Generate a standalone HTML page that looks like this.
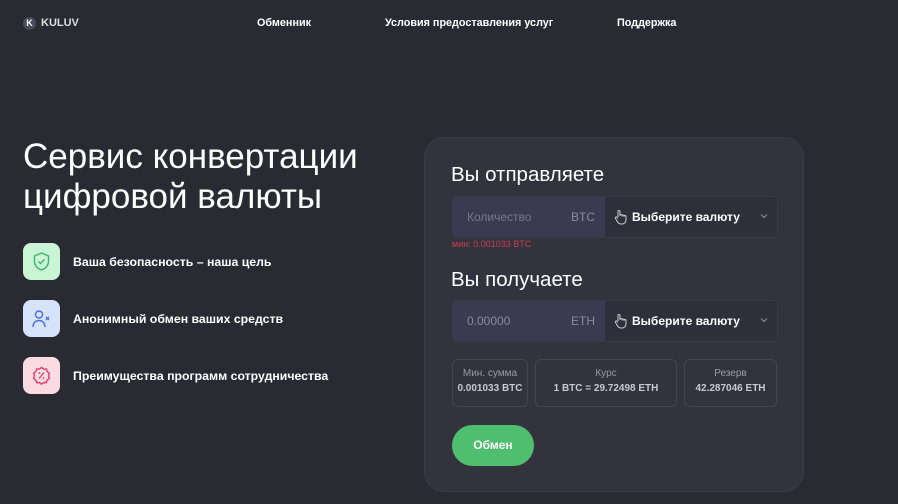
<!DOCTYPE html>
<html><head><meta charset="utf-8"><style>
*{margin:0;padding:0;box-sizing:border-box}
body{width:898px;height:504px;overflow:hidden;background:#2a2a33;font-family:"Liberation Sans",sans-serif;color:#fff;position:relative}
.a{position:absolute}
.nav{font-size:10.8px;font-weight:bold;top:17px}
.feat{left:23px;width:37px;height:37px;border-radius:8px}
.ft{left:73px;font-size:12.3px;font-weight:bold}
.card{left:424px;top:137px;width:380px;height:355px;border-radius:20px;background:#33333e;border:1px solid #3b3b47}
.inp{left:27px;width:326px;height:42px;border-radius:5px;background:#2f2e3b;border:1px solid #3a3948;overflow:hidden}
.inp .l{position:absolute;left:0;top:0;width:152px;height:100%;background:#3b3a50}
.ph{position:absolute;left:14px;top:13px;font-size:12px;color:#77778a}
.cur{position:absolute;left:118px;top:13px;font-size:12px;color:#8a8a9a}
.sel{position:absolute;left:179px;top:13px;font-size:12px;font-weight:bold}
.hand{position:absolute;left:161px;top:12px}
.chev{position:absolute;right:8px;top:14px}
.h{left:26px;font-size:20.5px}
.box{top:221px;height:48px;border:1px solid #45444f;border-radius:6px;text-align:center}
.box .t{font-size:10px;color:#9a9aa6;margin-top:8px}
.box .v{font-size:10px;font-weight:bold;color:#c8c8d0;margin-top:4px}
</style></head><body>
<div class="a" style="left:23px;top:17px;width:13px;height:13px;border-radius:50%;background:#4a4a5c;font-size:9px;font-weight:bold;text-align:center;line-height:13px">K</div>
<div class="a" style="left:41px;top:17px;font-size:11px;font-weight:bold;color:#ddd">KULUV</div>
<div class="a nav" style="left:257px">Обменник</div>
<div class="a nav" style="left:385px">Условия предоставления услуг</div>
<div class="a nav" style="left:617px">Поддержка</div>

<div class="a" style="left:23px;top:137px;font-size:35px;line-height:40px;white-space:nowrap">Сервис конвертации<br>цифровой валюты</div>

<div class="a feat" style="top:243px;background:#c9f5d6"><svg width="37" height="37" viewBox="0 0 37 37"><path d="M18.5 10l7 3v5c0 4.5-3 7.5-7 9-4-1.5-7-4.5-7-9v-5z" fill="none" stroke="#3cb46a" stroke-width="1.4"/><path d="M15.5 18.5l2 2 4-4" fill="none" stroke="#3cb46a" stroke-width="1.4"/></svg></div>
<div class="a ft" style="top:255px">Ваша безопасность – наша цель</div>
<div class="a feat" style="top:300px;background:#d6e3fb"><svg width="37" height="37" viewBox="0 0 37 37"><circle cx="16" cy="14.5" r="3.5" fill="none" stroke="#4a6ee0" stroke-width="1.4"/><path d="M10 27c0-4 2.5-6.5 6-6.5s6 2.5 6 6.5" fill="none" stroke="#4a6ee0" stroke-width="1.4"/><path d="M23 17l3 3M26 17l-3 3" stroke="#4a6ee0" stroke-width="1.3"/></svg></div>
<div class="a ft" style="top:312px">Анонимный обмен ваших средств</div>
<div class="a feat" style="top:357px;background:#fbdbe3"><svg width="37" height="37" viewBox="0 0 37 37"><path d="M18.5 10.5l2.2 1.6 2.7-.1.8 2.6 2.2 1.6-.9 2.6.9 2.6-2.2 1.6-.8 2.6-2.7-.1-2.2 1.6-2.2-1.6-2.7.1-.8-2.6-2.2-1.6.9-2.6-.9-2.6 2.2-1.6.8-2.6 2.7.1z" fill="none" stroke="#e0406a" stroke-width="1.4"/><path d="M16 21.5l5-6" stroke="#e0406a" stroke-width="1.3"/><circle cx="16.3" cy="16" r=".9" fill="#e0406a"/><circle cx="20.7" cy="21" r=".9" fill="#e0406a"/></svg></div>
<div class="a ft" style="top:369px">Преимущества программ сотрудничества</div>

<div class="a card">
<div class="a h" style="top:25px">Вы отправляете</div>
<div class="a inp" style="top:58px"><div class="l"></div><div class="ph">Количество</div><div class="cur">BTC</div>
<svg class="hand" width="14" height="16" viewBox="0 0 14 16"><path d="M4 8V2.5a1 1 0 012 0V7M6 6.5a1 1 0 012 0V7.5M8 7a1 1 0 012 0v1M10 7.5a1 1 0 012 0v3c0 2.5-1.5 4.5-4 4.5H7c-2 0-3-1-4-3L1.5 9.5a1 1 0 011.6-1.2L4 9.5" fill="none" stroke="#ccc" stroke-width="1"/></svg>
<div class="sel">Выберите валюту</div><svg class="chev" width="10" height="10" viewBox="0 0 10 10"><path d="M2 3.5l3 3 3-3" fill="none" stroke="#888" stroke-width="1.2"/></svg></div>
<div class="a" style="left:27px;top:101px;font-size:9px;color:#c9404a">мин: 0.001033 BTC</div>
<div class="a h" style="top:130px">Вы получаете</div>
<div class="a inp" style="top:162px"><div class="l"></div><div class="ph" style="color:#8a8a9a">0.00000</div><div class="cur">ETH</div>
<svg class="hand" width="14" height="16" viewBox="0 0 14 16"><path d="M4 8V2.5a1 1 0 012 0V7M6 6.5a1 1 0 012 0V7.5M8 7a1 1 0 012 0v1M10 7.5a1 1 0 012 0v3c0 2.5-1.5 4.5-4 4.5H7c-2 0-3-1-4-3L1.5 9.5a1 1 0 011.6-1.2L4 9.5" fill="none" stroke="#ccc" stroke-width="1"/></svg>
<div class="sel">Выберите валюту</div><svg class="chev" width="10" height="10" viewBox="0 0 10 10"><path d="M2 3.5l3 3 3-3" fill="none" stroke="#888" stroke-width="1.2"/></svg></div>
<div class="a box" style="left:27px;width:76px"><div class="t">Мин. сумма</div><div class="v">0.001033 BTC</div></div>
<div class="a box" style="left:110px;width:142px"><div class="t">Курс</div><div class="v">1 BTC = 29.72498 ETH</div></div>
<div class="a box" style="left:259px;width:93px"><div class="t">Резерв</div><div class="v">42.287046 ETH</div></div>
<div class="a" style="left:27px;top:287px;width:82px;height:41px;border-radius:21px;background:#4fbe6e;font-size:12px;font-weight:bold;text-align:center;line-height:41px">Обмен</div>
</div>
</body></html>
